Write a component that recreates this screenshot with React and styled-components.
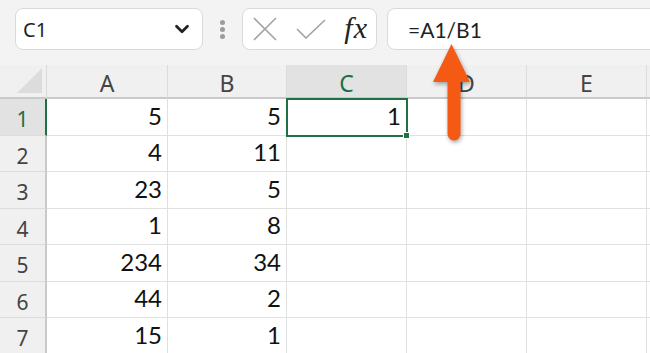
import React from "react";
import styled, { createGlobalStyle } from "styled-components";
import { ChevronDown } from "lucide-react";

const GlobalStyle = createGlobalStyle`
  html, body {
    margin: 0;
    padding: 0;
    background: #f3f3f3;
    overflow: hidden;
  }
  * { box-sizing: border-box; }
`;

const Page = styled.div`
  position: relative;
  width: 650px;
  height: 353px;
  overflow: hidden;
  background: #f3f3f3;
  font-family: "Noto Sans", "Open Sans", sans-serif;
`;

const Toolbar = styled.div`
  display: flex;
  align-items: center;
  height: 65px;
  padding: 0 0 7px 15px;
`;

const Box = styled.div`
  display: flex;
  align-items: center;
  height: 42px;
  background: #ffffff;
  border: 1px solid #dadada;
  border-radius: 8px;
`;

const NameBox = styled(Box)`
  width: 188px;
  padding: 0 9px 0 7px;
  justify-content: space-between;
  font-size: 20px;
  color: #1f1f1f;
`;

const Grip = styled.div`
  display: flex;
  flex-direction: column;
  gap: 2px;
  width: 39px;
  align-items: center;
`;

const Dot = styled.span`
  width: 5px;
  height: 5px;
  border-radius: 50%;
  background: #9c9c9c;
`;

const FxBox = styled(Box)`
  width: 135px;
  padding: 0 8px 0 10px;
  justify-content: space-between;
`;

const FxLabel = styled.span`
  font-family: "Liberation Serif", "DejaVu Serif", serif;
  font-style: italic;
  font-size: 30px;
  line-height: 1;
  color: #222;
  letter-spacing: 1px;
  margin-bottom: 3px;
`;

const FormulaBox = styled(Box)`
  flex: 1;
  margin-left: 10px;
  margin-right: -12px;
  padding-left: 20px;
  font-family: "Lato", "Noto Sans", sans-serif;
  font-size: 21px;
  color: #1f1f1f;
`;

const Grid = styled.div`
  display: grid;
  grid-template-columns: 47px 121px 119px 120px 120px 120px 1fr;
  grid-template-rows: 34px repeat(7, 36.5px);
`;

const Corner = styled.div`
  position: relative;
  background: #f0f0f0;
  border-right: 1px solid #d8d8d8;
  border-bottom: 2px solid #c9c9c9;
  &::after {
    content: "";
    position: absolute;
    right: 4px;
    bottom: 4px;
    width: 0;
    height: 0;
    border-left: 25px solid transparent;
    border-bottom: 25px solid #dcdcdc;
  }
`;

const ColHead = styled.div`
  display: flex;
  align-items: center;
  justify-content: center;
  background: ${(p) => (p.$active ? "#e2e2e2" : "#f0f0f0")};
  color: ${(p) => (p.$active ? "#1e6f42" : "#444")};
  border-right: 1px solid #dcdcdc;
  border-bottom: 2px solid #c9c9c9;
  font-size: 23px;
  padding-top: 4px;
`;

const RowHead = styled.div`
  display: flex;
  align-items: center;
  justify-content: center;
  background: ${(p) => (p.$active ? "#e2e2e2" : "#f0f0f0")};
  color: ${(p) => (p.$active ? "#1e6f42" : "#444")};
  border-right: ${(p) => (p.$active ? "2px solid #1e7145" : "2px solid #c9c9c9")};
  border-bottom: 1px solid #dcdcdc;
  font-size: 21px;
  padding-top: 5px;
`;

const Cell = styled.div`
  position: relative;
  display: flex;
  align-items: flex-end;
  justify-content: flex-end;
  padding: 0 5px 7px 0;
  background: #fff;
  border-right: 1px solid #e0e0e0;
  border-bottom: 1px solid #e0e0e0;
  font-family: "Lato", "Noto Sans", sans-serif;
  font-size: 24px;
  line-height: 1;
  color: #111;
  ${(p) =>
    p.$selected &&
    `
    outline: 2px solid #1e7145;
    outline-offset: -1px;
    z-index: 1;
  `}
`;

const Handle = styled.span`
  position: absolute;
  right: -4px;
  bottom: -4px;
  width: 7px;
  height: 7px;
  background: #1e7145;
  border: 1px solid #fff;
`;

const Arrow = styled.svg`
  position: absolute;
  left: 425px;
  top: 38px;
  filter: drop-shadow(1px 2px 2px rgba(0, 0, 0, 0.35));
`;

const CancelIcon = () => (
  <svg width="24" height="24" viewBox="0 0 24 24">
    <path d="M1 1 L23 23 M23 1 L1 23" stroke="#a3a3a3" strokeWidth="1.6" fill="none" />
  </svg>
);

const EnterIcon = () => (
  <svg width="30" height="20" viewBox="0 0 30 20">
    <path d="M1 10 L10 19 L29 1" stroke="#a3a3a3" strokeWidth="1.6" fill="none" />
  </svg>
);

const cols = ["A", "B", "C", "D", "E", ""];
const data = [
  [5, 5],
  [4, 11],
  [23, 5],
  [1, 8],
  [234, 34],
  [44, 2],
  [15, 1],
];

export default function App() {
  return (
    <Page>
      <GlobalStyle />
      <Toolbar>
        <NameBox>
          <span>C1</span>
          <ChevronDown size={22} strokeWidth={3} color="#222" />
        </NameBox>
        <Grip>
          <Dot />
          <Dot />
          <Dot />
        </Grip>
        <FxBox>
          <CancelIcon />
          <EnterIcon />
          <FxLabel>fx</FxLabel>
        </FxBox>
        <FormulaBox>=A1/B1</FormulaBox>
      </Toolbar>
      <Grid>
        <Corner />
        {cols.map((c, i) => (
          <ColHead key={i} $active={c === "C"}>
            {c}
          </ColHead>
        ))}
        {data.map((row, r) => (
          <React.Fragment key={r}>
            <RowHead $active={r === 0}>{r + 1}</RowHead>
            <Cell>{row[0]}</Cell>
            <Cell>{row[1]}</Cell>
            <Cell $selected={r === 0}>
              {r === 0 ? 1 : ""}
              {r === 0 && <Handle />}
            </Cell>
            <Cell />
            <Cell />
            <Cell />
          </React.Fragment>
        ))}
      </Grid>
      <Arrow width="56" height="110" viewBox="0 0 56 110">
        <path
          d="M26.5 6 L45 44 L35.5 44 L35.5 96 A6.5 6.5 0 0 1 22.5 96 L22.5 44 L8 44 Z"
          fill="#f55a14"
        />
      </Arrow>
    </Page>
  );
}
